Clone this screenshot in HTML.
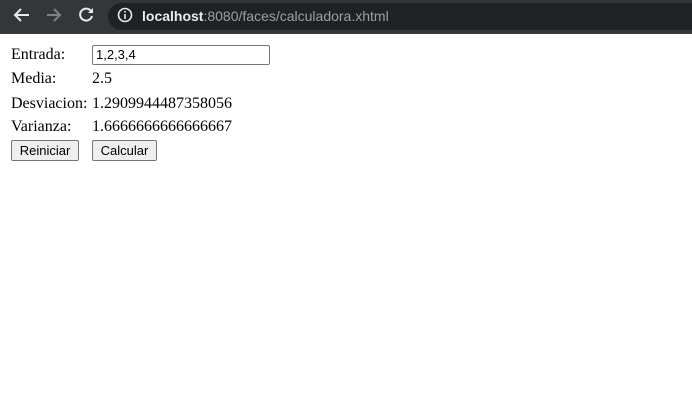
<!DOCTYPE html>
<html><head><meta charset="utf-8"><style>
body{margin:0;width:692px;height:418px;background:#fff;position:relative;overflow:hidden;font-family:"Liberation Serif",serif;font-size:16px;color:#000}
.bar{position:absolute;left:0;top:0;width:692px;height:33px;background:#35363a;border-bottom:1px solid #3c3c3c}
.addr{position:absolute;left:108px;top:3px;width:600px;height:27px;background:#202124;border-radius:14px}
.url{position:absolute;left:142px;top:6px;font-family:"Liberation Sans",sans-serif;font-size:14px;color:#9aa0a6;line-height:20px}
.url b{color:#e8eaed;font-weight:bold}
.t{position:absolute;line-height:18px}
.inp{position:absolute;left:92px;top:45px;width:173px;height:18px;border:1px solid #767676;border-radius:2px;font-family:"Liberation Sans",sans-serif;font-size:13px;line-height:18px;padding-left:3px;box-sizing:content-box}
.btn{position:absolute;top:140px;height:19px;border:1px solid #767676;border-radius:2px;background:#efefef;font-family:"Liberation Sans",sans-serif;font-size:13px;line-height:19px;text-align:center}
</style></head><body>
<div class="bar">
<svg width="110" height="33" style="position:absolute;left:0;top:0" fill="none" stroke-width="2">
<path d="M29 15H16M21 9l-6 6 6 6" stroke="#e8eaed"/>
<path d="M47 15h13M54 9l6 6-6 6" stroke="#7e8185"/>
<path d="M91 11a6 6 0 1 0 1 5" stroke="#e8eaed"/><path d="M93 8v5h-5z" fill="#e8eaed" stroke="none"/>
</svg>
<div class="addr"></div>
<svg width="16" height="16" style="position:absolute;left:117px;top:7px"><circle cx="8" cy="8" r="6.5" stroke="#e8eaed" stroke-width="1.6" fill="none"/><rect x="7.2" y="7" width="1.6" height="5" fill="#e8eaed"/><rect x="7.2" y="4" width="1.6" height="1.6" fill="#e8eaed"/></svg>
<div class="url"><b>localhost</b>:8080/faces/calculadora.xhtml</div>
</div>
<div class="t" style="left:11px;top:46px">Entrada:</div>
<div class="inp">1,2,3,4</div>
<div class="t" style="left:11px;top:70px">Media:</div>
<div class="t" style="left:92px;top:70px">2.5</div>
<div class="t" style="left:11px;top:95px">Desviacion:</div>
<div class="t" style="left:92px;top:95px">1.2909944487358056</div>
<div class="t" style="left:11px;top:118px">Varianza:</div>
<div class="t" style="left:92px;top:118px">1.6666666666666667</div>
<div class="btn" style="left:11px;width:66px">Reiniciar</div>
<div class="btn" style="left:92px;width:63px">Calcular</div>
</body></html>
